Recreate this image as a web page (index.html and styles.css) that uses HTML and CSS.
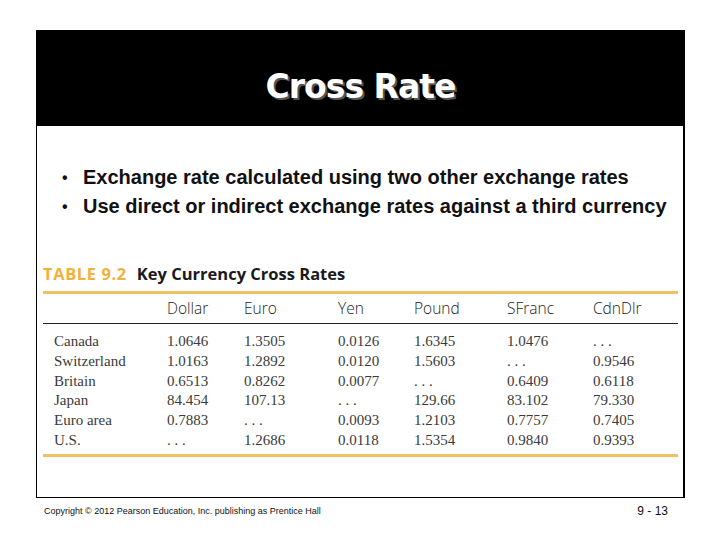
FILE: index.html
```html
<!DOCTYPE html>
<html>
<head>
<meta charset="utf-8">
<link rel="stylesheet" href="styles.css">
</head>
<body>
<div class="page">
  <div class="slide">
    <div class="header"><h1 class="title">Cross Rate</h1></div>
    <div class="content">
      <ul class="bullets">
        <li><span class="dot">•</span><span>Exchange rate calculated using two other exchange rates</span></li>
        <li><span class="dot">•</span><span>Use direct or indirect exchange rates against a third currency</span></li>
      </ul>
      <div class="tbl">
        <div class="caption"><span class="tnum">TABLE 9.2</span><span class="tname">Key Currency Cross Rates</span></div>
        <div class="rule-orange"></div>
        <div class="row head">
          <span></span><span>Dollar</span><span>Euro</span><span>Yen</span><span>Pound</span><span>SFranc</span><span>CdnDlr</span>
        </div>
        <div class="rule-black"></div>
        <div class="body">
          <div class="row"><span>Canada</span><span>1.0646</span><span>1.3505</span><span>0.0126</span><span>1.6345</span><span>1.0476</span><span>. . .</span></div>
          <div class="row"><span>Switzerland</span><span>1.0163</span><span>1.2892</span><span>0.0120</span><span>1.5603</span><span>. . .</span><span>0.9546</span></div>
          <div class="row"><span>Britain</span><span>0.6513</span><span>0.8262</span><span>0.0077</span><span>. . .</span><span>0.6409</span><span>0.6118</span></div>
          <div class="row"><span>Japan</span><span>84.454</span><span>107.13</span><span>. . .</span><span>129.66</span><span>83.102</span><span>79.330</span></div>
          <div class="row"><span>Euro area</span><span>0.7883</span><span>. . .</span><span>0.0093</span><span>1.2103</span><span>0.7757</span><span>0.7405</span></div>
          <div class="row"><span>U.S.</span><span>. . .</span><span>1.2686</span><span>0.0118</span><span>1.5354</span><span>0.9840</span><span>0.9393</span></div>
        </div>
        <div class="rule-orange bottom"></div>
      </div>
    </div>
  </div>
  <div class="footer">
    <span class="copy">Copyright © 2012 Pearson Education, Inc. publishing as Prentice Hall</span>
    <span class="pgnum">9 - 13</span>
  </div>
</div>
</body>
</html>
```

FILE: styles.css
```css
html, body {
  margin: 0;
  padding: 0;
  background: #ffffff;
}
.page {
  width: 720px;
  height: 540px;
  padding: 30px 0 0 36px;
  box-sizing: border-box;
}
.slide {
  width: 649px;
  height: 468px;
  box-sizing: border-box;
  border-left: 1px solid #000;
  border-right: 2px solid #000;
  border-bottom: 1px solid #000;
  display: flex;
  flex-direction: column;
}
.header {
  height: 96px;
  background: #000;
  display: flex;
  align-items: center;
  justify-content: center;
  margin-right: -2px;
  margin-left: -1px;
}
.title {
  margin: 0;
  padding-top: 16px;
  font-family: "DejaVu Sans", sans-serif;
  font-weight: bold;
  font-size: 33px;
  letter-spacing: -1px;
  color: #fff;
  text-shadow: 2px 2px 0 #555;
}
.content {
  padding: 0 0 0 6px;
}
.bullets {
  list-style: none;
  margin: 0;
  padding: 37px 0 0 19px;
  font-family: "Liberation Sans", Arial, sans-serif;
  font-weight: bold;
  font-size: 20px;
  color: #111;
}
.bullets li {
  display: flex;
  height: 29px;
  align-items: center;
}
.dot {
  width: 21px;
  font-size: 16px;
}
.tbl {
  margin-top: 43px;
  width: 635px;
}
.caption {
  font-family: "Open Sans", sans-serif;
  font-weight: bold;
  font-size: 16.5px;
  line-height: 20px;
  display: flex;
  gap: 10px;
}
.tnum {
  color: #f2b13d;
  letter-spacing: 0.6px;
}
.tname {
  color: #1a1a1a;
}
.rule-orange {
  height: 3px;
  background: #f0c063;
  margin-top: 7px;
}
.rule-orange.bottom {
  margin-top: 3px;
}
.rule-black {
  height: 1px;
  background: #222;
  margin-top: 0;
}
.row {
  display: grid;
  grid-template-columns: 124px 77px 94px 76px 93px 86px 85px;
  padding-left: 0;
}
.row > span:first-child {
  padding-left: 11px;
}
.head {
  font-family: "Open Sans", sans-serif;
  font-weight: 300;
  font-size: 15.5px;
  color: #222;
  height: 29px;
  line-height: 29px;
}
.body {
  padding-top: 8px;
  font-family: "Liberation Serif", "Times New Roman", serif;
  font-size: 15px;
  color: #3a3a3a;
}
.body .row {
  height: 19.8px;
  line-height: 19.8px;
}
.footer {
  display: flex;
  justify-content: space-between;
  width: 624px;
  padding: 6px 0 0 8px;
  font-family: "Liberation Sans", Arial, sans-serif;
  color: #111;
}
.copy {
  font-size: 9px;
  line-height: 14px;
}
.pgnum {
  font-size: 12px;
  line-height: 14px;
}
```
